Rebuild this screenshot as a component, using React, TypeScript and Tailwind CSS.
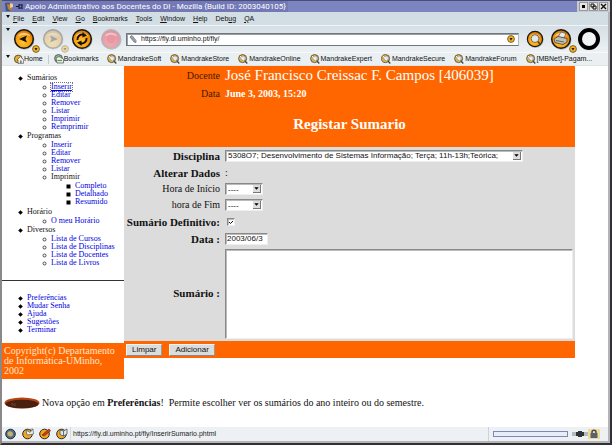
import { useState } from "react";
import type { ReactNode } from "react";

const menus: [string, string, string][] = [
  ["", "F", "ile"],
  ["", "E", "dit"],
  ["", "V", "iew"],
  ["", "G", "o"],
  ["", "B", "ookmarks"],
  ["", "T", "ools"],
  ["", "W", "indow"],
  ["", "H", "elp"],
  ["Deb", "u", "g"],
  ["", "Q", "A"],
];

const bookmarks = [
  "MandrakeSoft",
  "MandrakeStore",
  "MandrakeOnline",
  "MandrakeExpert",
  "MandrakeSecure",
  "MandrakeForum",
  "[MBNet]-Pagam...",
];

function Grip({ className }: { className: string }) {
  return (
    <svg viewBox="0 0 4 3" className={`h-[3px] w-1 shrink-0 ${className}`} aria-hidden="true">
      <path d="M0 0H4L2 3Z" fill="#111" />
    </svg>
  );
}

function Orb({ faded, tone, children }: { faded?: boolean; tone?: "red"; children: ReactNode }) {
  const id = tone === "red" ? "orb-red" : "orb-gold";
  return (
    <svg viewBox="0 0 22 22" className={`size-full ${faded ? "opacity-30" : ""}`} aria-hidden="true">
      <defs>
        <radialGradient id={id} cx="45%" cy="65%" r="60%">
          <stop offset="0" stopColor={tone ? "#f0a0a8" : "#ffc832"} />
          <stop offset="0.6" stopColor={tone ? "#ee8c96" : "#f9a010"} />
          <stop offset="1" stopColor={tone ? "#e08088" : "#d87800"} />
        </radialGradient>
      </defs>
      <circle cx="11.5" cy="11.8" r="10" fill="#8b949c" opacity="0.6" />
      <circle cx="11" cy="11" r="9.3" fill={`url(#${id})`} stroke={tone ? "#b5a4ac" : "#1b1712"} strokeWidth="1.5" />
      <path d="M4.5 8.5C6 4 15 3 17.5 8.5C14 6.500 8 6.500 4.500 8.500Z" fill="#fff" opacity="0.5" />
      {children}
    </svg>
  );
}

function Ball({ className }: { className?: string }) {
  return (
    <svg viewBox="0 0 8 8" className={`size-2 ${className ?? ""}`} aria-hidden="true">
      <circle cx="4" cy="4" r="3.4" fill="#f6b520" stroke="#6b5526" strokeWidth="0.9" />
      <path d="M2.500 3H5.500L4 5.700Z" fill="#2a1c00" />
    </svg>
  );
}

function BookmarkIcon() {
  return (
    <svg viewBox="0 0 10 10" className="size-[10px] shrink-0" aria-hidden="true">
      <circle cx="4.600" cy="4.600" r="4" fill="#eab43c" stroke="#5a5140" strokeWidth="0.900" />
      <circle cx="5.200" cy="4.200" r="2.300" fill="#dfe8ee" stroke="#7e858c" strokeWidth="0.600" />
      <path d="M2 2L7.500 8" stroke="#f7f7f7" strokeWidth="1" />
      <path d="M6.500 6.500L9.300 9.500" stroke="#444" strokeWidth="1.300" />
    </svg>
  );
}

function HomeIcon() {
  return (
    <svg viewBox="0 0 10 10" className="size-[10px] shrink-0" aria-hidden="true">
      <circle cx="4.300" cy="5" r="3.900" fill="#e9ab2c" stroke="#5a4c2a" strokeWidth="0.900" />
      <path d="M3 6L6.500 2.500L9.600 6V9.300H4V6Z" fill="#f3f3ee" stroke="#555" strokeWidth="0.700" />
      <path d="M6 6.500H7.600V9.300H6Z" fill="#777" />
    </svg>
  );
}

function FolderIcon() {
  return (
    <svg viewBox="0 0 10 10" className="size-[10px] shrink-0" aria-hidden="true">
      <circle cx="4.500" cy="4.500" r="3.900" fill="#9bb59a" stroke="#4b5a4b" strokeWidth="0.900" />
      <path d="M2 4L5 2.500L9.500 5V9H3Z" fill="#e8efe6" stroke="#4d584c" strokeWidth="0.700" />
      <path d="M3.500 6.500H8" stroke="#57a050" strokeWidth="1.200" />
    </svg>
  );
}

function ToolButton({
  label,
  faded,
  tone,
  ball,
  size,
  children,
}: {
  label: string;
  faded?: boolean;
  tone?: "red";
  ball?: boolean;
  size?: "small";
  children?: ReactNode;
}) {
  return (
    <button type="button" aria-label={label} className={`relative shrink-0 ${size ? "size-[18px]" : "size-[22px]"}`}>
      <Orb faded={faded} tone={tone}>
        {children}
      </Orb>
      {ball && <Ball className={`absolute -right-[5px] -bottom-[3px] ${faded ? "opacity-40" : ""}`} />}
    </button>
  );
}

function TitleBar() {
  return (
    <header className="flex h-3 items-center border-t border-[#4a4d74] bg-[#7d84c2] bg-[radial-gradient(#5a609c_30%,transparent_35%)] bg-[length:2px_2px] pl-[3px] text-white">
      <div className="flex h-full items-center gap-[2px] bg-[#7379b6] pr-[2px]">
        <svg viewBox="0 0 9 10" className="h-[10px] w-[9px]" aria-hidden="true">
          <path d="M0 1H6V9H1Z" fill="#345e7c" />
          <path d="M2 2L8 3L6 9L3 7Z" fill="#cc7a2e" />
          <path d="M5 1L8 2V5L5 6Z" fill="#e8d09a" />
        </svg>
        <svg viewBox="0 0 7 7" className="size-[7px]" aria-hidden="true">
          <path d="M0 3.500H3M3 1V6M3 2H6M3 5H6M6 1V6" stroke="#14152c" fill="none" />
        </svg>
        <h1 className="font-[Roboto,sans-serif] text-[8px] whitespace-nowrap">Apoio Administrativo aos Docentes do DI - Mozilla {"{Build ID: 2003040105}"}</h1>
      </div>
      <div className="ml-auto flex h-full items-center gap-px bg-[#c9c9cf] px-[2px] text-[#111]">
        <button type="button" aria-label="Minimize" className="size-[9px] border border-[#999] bg-[#e4e4e4]">
          <svg viewBox="0 0 7 7" className="size-[7px]"><path d="M2 2H5V5H2Z" /></svg>
        </button>
        <button type="button" aria-label="Maximize" className="size-[9px] border border-[#999] bg-[#e4e4e4]">
          <svg viewBox="0 0 7 7" className="size-[7px]"><path d="M1 1H4V4H1ZM3 3H6V6H3Z" fill="none" stroke="#111" /></svg>
        </button>
        <button type="button" aria-label="Close" className="size-[9px] border border-[#999] bg-[#e4e4e4]">
          <svg viewBox="0 0 7 7" className="size-[7px]"><path d="M1 1L6 6M6 1L1 6" stroke="#111" strokeWidth="1.400" /></svg>
        </button>
      </div>
    </header>
  );
}

function MenuBar() {
  return (
    <nav className="flex h-[14px] items-center border-b border-[#eef3f5] bg-[#d2dee4] pl-1">
      <Grip className="mb-[5px]" />
      <div className="flex gap-2 pl-[3px]">
        {menus.map(([before, key, after]) => (
          <button type="button" key={before + key + after}>
            {before}
            <span className="underline">{key}</span>
            {after}
          </button>
        ))}
      </div>
    </nav>
  );
}

function NavBar() {
  return (
    <div className="flex h-[26px] items-center bg-gradient-to-b from-[#d5dfe5] to-[#edf1f4] pl-1">
      <Grip className="mb-5" />
      <div className="flex items-center gap-[7px] pl-[3px]">
        <ToolButton label="Back" ball>
          <path d="M6 11L14 7.500L12.500 11L14 14.500Z" fill="#1a1206" />
        </ToolButton>
        <ToolButton label="Forward" faded ball>
          <path d="M16 11L8 7.500L9.500 11L8 14.500Z" fill="#1a1206" />
        </ToolButton>
        <ToolButton label="Reload">
          <path d="M6.500 12A4.700 4.700 0 0 1 12.500 6.800M15.500 10A4.700 4.700 0 0 1 9.500 15.200" fill="none" stroke="#1a1206" strokeWidth="2" />
          <path d="M11.500 4L16 7.500L11.500 9.500ZM10.500 18L6 14.500L10.500 12.500Z" fill="#1a1206" />
        </ToolButton>
        <div className="flex opacity-80">
          <ToolButton label="Stop" tone="red">
            <circle cx="11" cy="11" r="4.500" fill="#ea8490" />
          </ToolButton>
        </div>
      </div>
      <div className="ml-1 flex h-[13px] flex-1 items-center border border-[#70757b] border-r-[#b4b8bc] bg-white pr-[3px] pl-[2px] shadow-[inset_1px_1px_0_#9a9fa5]">
        <svg viewBox="0 0 8 8" className="size-2 shrink-0" aria-hidden="true">
          <path d="M1 2L3 0.500L7 5.500V7.500L5 7Z" fill="#aebccb" stroke="#57616c" strokeWidth="0.700" />
          <path d="M2 1.500L6 6.500" stroke="#57616c" strokeWidth="0.500" />
        </svg>
        <input aria-label="Location" defaultValue="https://fly.di.uminho.pt/fly/" className="min-w-0 flex-1 pl-1 outline-none" />
        <button type="button" aria-label="Location history" className="flex"><Ball /></button>
      </div>
      <div className="flex items-center gap-[6px] pr-2 pl-[7px]">
        <ToolButton label="Search" size="small">
          <circle cx="11" cy="10.500" r="4.800" fill="#dfe7ef" stroke="#7b6a43" strokeWidth="1.200" />
          <path d="M14.500 14L17 17" stroke="#5a4622" strokeWidth="2" />
        </ToolButton>
        <ToolButton label="Print" ball>
          <path d="M8 9L11 4L16 5.500L14 10Z" fill="#e9e9e4" stroke="#555" strokeWidth="0.700" />
          <path d="M4 11L8 8.500L17 10.500V14L13 16.500L5 14.500Z" fill="#c2c0b5" stroke="#45423b" strokeWidth="0.800" />
          <path d="M6 12.500L14 14" stroke="#66635b" />
        </ToolButton>
        <svg viewBox="0 0 22 22" className="size-[22px]" aria-hidden="true">
          <circle cx="11" cy="11" r="9" fill="#f1f4f6" stroke="#000" strokeWidth="4" />
        </svg>
      </div>
    </div>
  );
}

function BookmarksBar() {
  return (
    <nav className="flex h-[14px] items-center overflow-hidden border-y border-t-[#f6f8f9] border-b-[#dfe4e7] bg-[#eaeff2] pl-1 whitespace-nowrap">
      <Grip className="mb-[5px]" />
      <div className="flex items-center gap-[5px] pl-1">
        <a href="#home" className="flex items-center"><HomeIcon />Home</a>
        <span className="h-[9px] w-px bg-[#c5cbd0]" />
        <a href="#bookmarks" className="flex items-center"><FolderIcon />Bookmarks</a>
      </div>
      <div className="flex items-center gap-[9px] pl-2">
        {bookmarks.map((name) => (
          <a href="#bookmark" key={name} className="flex items-center gap-px"><BookmarkIcon />{name}</a>
        ))}
      </div>
    </nav>
  );
}

function Bullet({ kind }: { kind: "disc" | "ring" | "box" }) {
  return (
    <svg viewBox="0 0 5 5" className="mr-1 size-[5px] shrink-0" aria-hidden="true">
      {kind === "disc" && <path d="M2.500 0.200L4.800 2.500L2.500 4.800L0.200 2.500Z" />}
      {kind === "ring" && <circle cx="2.500" cy="2.500" r="1.500" fill="none" stroke="#222" strokeWidth="0.800" />}
      {kind === "box" && <path d="M0.500 0.500H4.500V4.500H0.500Z" />}
    </svg>
  );
}

function Entry({ kind, link, focus, children }: { kind: "disc" | "ring" | "box"; link?: boolean; focus?: boolean; children: ReactNode }) {
  return (
    <div className="flex items-center">
      <Bullet kind={kind} />
      {link ? (
        <a href="#pagina" className={`text-[#0000e0] ${focus ? "underline outline-1 outline-dotted outline-[#777]" : ""}`}>{children}</a>
      ) : (
        <span>{children}</span>
      )}
    </div>
  );
}

function Section({ title, items, children }: { title: string; items: string[]; children?: ReactNode }) {
  return (
    <li>
      <Entry kind="disc">{title}</Entry>
      <ul className="py-px pl-6">
        {items.map((item) => (
          <li key={item}>
            <Entry kind="ring" link focus={title === "Sumários" && item === "Inserir"}>{item}</Entry>
          </li>
        ))}
        {children}
      </ul>
    </li>
  );
}

function Sidebar() {
  return (
    <aside className="w-[122px] shrink-0 font-['Liberation_Serif',serif] text-[8px] leading-[8px]">
      <ul className="pt-2 pl-4">
        <Section title="Sumários" items={["Inserir", "Editar", "Remover", "Listar", "Imprimir", "Reimprimir"]} />
        <Section title="Programas" items={["Inserir", "Editar", "Remover", "Listar"]}>
          <li>
            <Entry kind="ring">Imprimir</Entry>
            <ul className="py-px pl-6">
              {["Completo", "Detalhado", "Resumido"].map((item) => (
                <li key={item}><Entry kind="box" link>{item}</Entry></li>
              ))}
            </ul>
          </li>
        </Section>
        <Section title="Horário" items={["O meu Horário"]} />
        <Section title="Diversos" items={["Lista de Cursos", "Lista de Disciplinas", "Lista de Docentes", "Lista de Livros"]} />
      </ul>
      <hr className="mt-3 border-t border-[#333]" />
      <ul className="pt-[13px] pb-[9px] pl-4">
        {["Preferências", "Mudar Senha", "Ajuda", "Sugestões", "Terminar"].map((item) => (
          <li key={item}><Entry kind="disc" link>{item}</Entry></li>
        ))}
      </ul>
      <p className="bg-[#ff6600] px-[2px] py-[3px] text-[10px] leading-[10px] text-[#ffe6cc]">
        Copyright(c) Departamento de Informática-UMinho, 2002
      </p>
    </aside>
  );
}

const sunken = "border border-t-[#888] border-l-[#888] border-r-[#eee] border-b-[#eee] bg-white shadow-[inset_1px_1px_0_#bbb]";

function Picker({ id, value, className }: { id: string; value: string; className: string }) {
  return (
    <div className={`relative h-3 ${className}`}>
      <select id={id} className={`block h-3 w-full appearance-none pl-[2px] leading-[9px] ${sunken}`}>
        <option>{value}</option>
      </select>
      <svg viewBox="0 0 8 8" className="pointer-events-none absolute top-[2px] right-[2px] size-2 border-r border-b border-[#777] bg-[#ddd]" aria-hidden="true">
        <path d="M1.500 2.500H6.500L4 5.500Z" />
      </svg>
    </div>
  );
}

function Label({ htmlFor, plain, children }: { htmlFor: string; plain?: boolean; children: ReactNode }) {
  return (
    <label htmlFor={htmlFor} className={`text-right font-['Liberation_Serif',serif] whitespace-nowrap ${plain ? "text-[10px]" : "text-[11px] font-bold"}`}>
      {children}
    </label>
  );
}

function SummaryForm() {
  const [final, setFinal] = useState(true);
  return (
    <form className="min-w-0 flex-1 text-[8px]" onSubmit={(e) => e.preventDefault()}>
      <div className="bg-[#ff6600] pb-[14px] font-['Liberation_Serif',serif] text-white">
        <dl className="grid grid-cols-[96px_1fr] items-center gap-x-[5px]">
          <dt className="text-right text-[10px] text-[#3a1c05]">Docente</dt>
          <dd className="text-[15px] leading-[19px]">José Francisco Creissac F. Campos [406039]</dd>
          <dt className="text-right text-[10px] text-[#3a1c05]">Data</dt>
          <dd className="text-[10px] leading-[18px] font-bold">June 3, 2003, 15:20</dd>
        </dl>
        <h2 className="pt-3 text-center text-[15px] leading-[18px] font-bold">Registar Sumario</h2>
      </div>
      <div className="grid grid-cols-[96px_1fr] grid-rows-[17px_17px_16px_16px_17px_17px_auto] items-center gap-x-[5px] bg-[#dcdcdc] pb-[2px]">
        <Label htmlFor="disciplina">Disciplina</Label>
        <Picker id="disciplina" className="w-[298px]" value="5308O7; Desenvolvimento de Sistemas Informação; Terça; 11h-13h;Teórica;" />
        <span className="text-right font-['Liberation_Serif',serif] text-[11px] font-bold">Alterar Dados</span>
        <span className="font-['Liberation_Serif',serif] text-[10px]">:</span>
        <Label htmlFor="inicio" plain>Hora de Início</Label>
        <Picker id="inicio" className="w-[38px]" value="----" />
        <Label htmlFor="fim" plain>hora de Fim</Label>
        <Picker id="fim" className="w-[38px]" value="----" />
        <Label htmlFor="definitivo">Sumário Definitivo:</Label>
        <div className="relative ml-[2px] size-2">
          <input id="definitivo" type="checkbox" checked={final} onChange={(e) => setFinal(e.target.checked)} className={`block size-2 appearance-none ${sunken}`} />
          {final && (
            <svg viewBox="0 0 8 8" className="pointer-events-none absolute inset-0 size-2" aria-hidden="true">
              <path d="M2 4L3.500 5.500L6 3" fill="none" stroke="#111" />
            </svg>
          )}
        </div>
        <Label htmlFor="data">Data :</Label>
        <input id="data" defaultValue="2003/06/3" className={`h-3 w-[43px] pl-px outline-none ${sunken}`} />
        <Label htmlFor="sumario">Sumário :</Label>
        <div className="pt-[2px] pr-[2px]">
          <textarea id="sumario" className={`block h-[90px] w-full resize-none outline-none ${sunken}`} />
        </div>
      </div>
      <div className="flex h-[17px] items-center gap-[7px] bg-[#ff6600] px-[2px]">
        {["Limpar", "Adicionar"].map((name) => (
          <button type="button" key={name} className="h-3 border border-t-[#f4f4f4] border-r-[#999] border-b-[#888] border-l-[#f4f4f4] bg-[#dcdcdc] px-[5px] leading-[10px]">
            {name}
          </button>
        ))}
      </div>
    </form>
  );
}

function TrayIcon({ kind }: { kind: "globe" | "mail" | "pen" | "book" }) {
  return (
    <svg viewBox="0 0 12 12" className="size-3" aria-hidden="true">
      <circle cx="5.500" cy="6" r="4.800" fill={kind === "globe" ? "#4c6f8d" : "#f0a71e"} stroke="#29292d" />
      {kind === "globe" && <path d="M3 4C5 2 8 4 8 6S6 9 4 8S2 6 3 4Z" fill="#c5b36a" />}
      {kind === "mail" && <path d="M4 2L11 1L11.500 6L5 7ZM4 2L8 4.500L11 1" fill="#eef2f4" stroke="#555d66" strokeWidth="0.700" />}
      {kind === "pen" && <path d="M3 7L10 1L11.500 3L5 8Z" fill="#cc3d16" stroke="#64200c" strokeWidth="0.600" />}
      {kind === "book" && <path d="M4 2L7.500 3L11 1V6L7.500 8L4 6.500ZM7.500 3V8" fill="#dce7ee" stroke="#46535f" strokeWidth="0.800" />}
    </svg>
  );
}

function StatusBar() {
  return (
    <footer className="flex h-[14px] items-center bg-[#edf1f4] pl-[3px] text-[#222]">
      <div className="flex gap-[5px]">
        {(["globe", "mail", "pen", "book"] as const).map((kind) => (
          <button type="button" key={kind} aria-label={kind}><TrayIcon kind={kind} /></button>
        ))}
      </div>
      <span className="ml-[2px] h-full w-px bg-[#d5dbe0]" />
      <span className="ml-[2px]">https://fly.di.uminho.pt/fly/InserirSumario.phtml</span>
      <div className="ml-auto flex h-full items-center">
        <span className="h-full w-px bg-[#cdd3d8]" />
        <span className="mx-1 h-[6px] w-[75px] border border-[#8186b8] bg-[#e9edf7]" />
        <svg viewBox="0 0 16 8" className="h-2 w-4" aria-hidden="true">
          <path d="M0 3H5M0 5H5M11 3H16M11 5H16" stroke="#7d858b" />
          <path d="M4 2H7V6H4ZM9 2H12V6H9ZM6 1H10V7H6Z" fill="#2e3538" />
        </svg>
        <svg viewBox="0 0 12 12" className="h-3 w-3" aria-hidden="true">
          <path d="M0 1H12V11H0Z" fill="#f0dc98" />
          <path d="M4 6V4C4 1.500 8 1.500 8 4V6" fill="none" stroke="#444b52" strokeWidth="1.500" />
          <path d="M2.500 5H9.500V10H2.500Z" fill="#56626d" />
        </svg>
        <span className="w-2" />
      </div>
    </footer>
  );
}

export default function App() {
  return (
    <div className="flex min-h-screen flex-col border-r-2 border-b-2 border-l-2 border-[#303036] border-l-[#8a8888] bg-white font-['Liberation_Sans',sans-serif] text-[7px] leading-[10px] text-[#111]">
      <TitleBar />
      <div className="flex flex-1 flex-col border-r-2 border-b-2 border-[#b5b5b8]">
        <MenuBar />
        <NavBar />
        <BookmarksBar />
        <main className="flex-1">
          <div className="flex items-start pr-[33px]">
            <Sidebar />
            <SummaryForm />
          </div>
          <p className="flex items-center gap-[2px] pt-[17px] pl-[2px] font-['Liberation_Serif',serif] text-[10px] leading-[14px]">
            <svg viewBox="0 0 36 12" className="h-3 w-9" aria-hidden="true">
              <ellipse cx="18" cy="6" rx="17.500" ry="5.500" fill="#b54612" />
              <ellipse cx="18" cy="7" rx="16.500" ry="4.300" fill="#48200f" />
              <path d="M8 6V9M8 6L11 9V6" stroke="#75513c" strokeWidth="0.600" fill="none" />
            </svg>
            <span>Nova opção em <b>Preferências</b>!&nbsp; Permite escolher ver os sumários do ano inteiro ou do semestre.</span>
          </p>
        </main>
        <StatusBar />
      </div>
    </div>
  );
}
